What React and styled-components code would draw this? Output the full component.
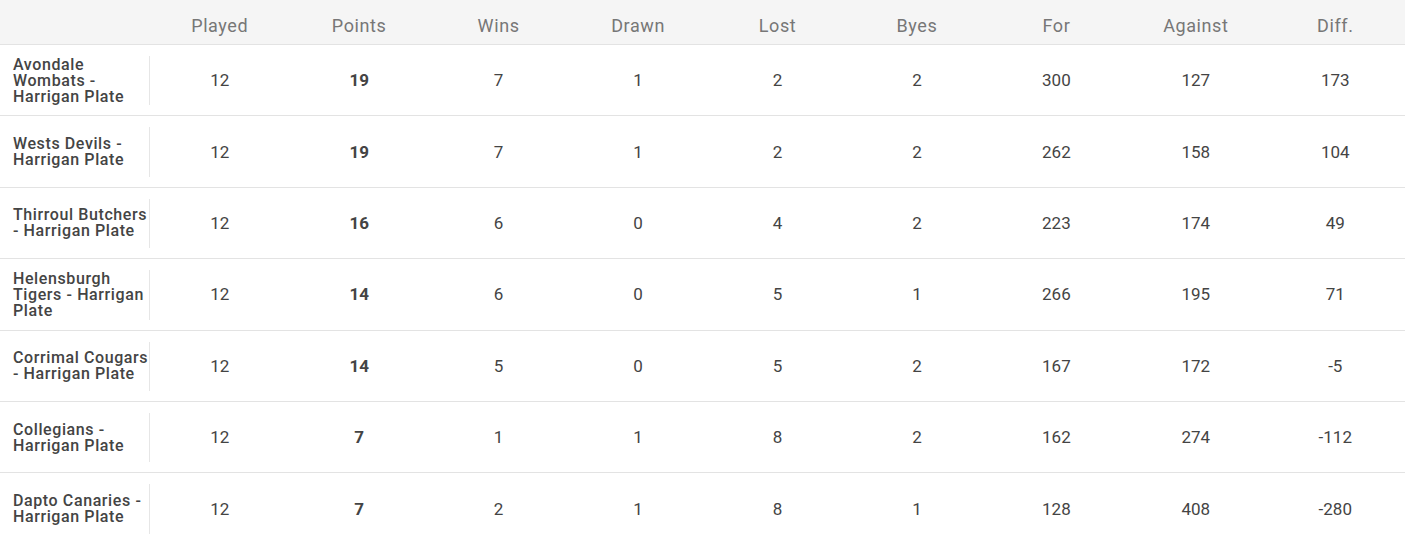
import React from "react";
import styled, { createGlobalStyle } from "styled-components";

const Global = createGlobalStyle`
  html, body { margin: 0; padding: 0; background: #fff; }
  body { font-family: Roboto, "Liberation Sans", sans-serif; }
`;

const Table = styled.div`
  width: 1405px;
  display: flex;
  flex-direction: column;
`;

const Row = styled.div`
  display: grid;
  grid-template-columns: 150px repeat(9, 1fr);
  height: ${(p) => (p.$head ? "45px" : "71.4px")};
  box-sizing: border-box;
  background: ${(p) => (p.$head ? "#f5f5f5" : "#fff")};
  border-bottom: 1px solid #e3e3e3;
`;

const HeadCell = styled.div`
  display: flex;
  align-items: center;
  justify-content: center;
  font-size: 18px;
  color: #777;
  letter-spacing: 0.6px;
  padding-top: 6px;
  box-sizing: border-box;
`;

const TeamCell = styled.div`
  display: flex;
  align-items: center;
  padding: 11px 0 10px 13px;
  box-sizing: border-box;
`;

const TeamName = styled.div`
  height: 100%;
  width: 100%;
  display: flex;
  align-items: center;
  border-right: 1px solid #e6e6e6;
  font-size: 16px;
  font-weight: 500;
  line-height: 16px;
  letter-spacing: 0.6px;
  color: #444;
  box-sizing: border-box;
`;

const Cell = styled.div`
  display: flex;
  align-items: center;
  justify-content: center;
  font-size: 17px;
  font-weight: ${(p) => (p.$bold ? 700 : 400)};
  color: #444;
`;

const headers = ["Played", "Points", "Wins", "Drawn", "Lost", "Byes", "For", "Against", "Diff."];

const rows = [
  ["Avondale Wombats - Harrigan Plate", 12, 19, 7, 1, 2, 2, 300, 127, 173],
  ["Wests Devils - Harrigan Plate", 12, 19, 7, 1, 2, 2, 262, 158, 104],
  ["Thirroul Butchers - Harrigan Plate", 12, 16, 6, 0, 4, 2, 223, 174, 49],
  ["Helensburgh Tigers - Harrigan Plate", 12, 14, 6, 0, 5, 1, 266, 195, 71],
  ["Corrimal Cougars - Harrigan Plate", 12, 14, 5, 0, 5, 2, 167, 172, -5],
  ["Collegians - Harrigan Plate", 12, 7, 1, 1, 8, 2, 162, 274, -112],
  ["Dapto Canaries - Harrigan Plate", 12, 7, 2, 1, 8, 1, 128, 408, -280],
];

export default function App() {
  return (
    <>
      <Global />
      <Table>
        <Row $head>
          <HeadCell />
          {headers.map((h) => (
            <HeadCell key={h}>{h}</HeadCell>
          ))}
        </Row>
        {rows.map(([name, ...vals]) => (
          <Row key={name}>
            <TeamCell>
              <TeamName>{name}</TeamName>
            </TeamCell>
            {vals.map((v, i) => (
              <Cell key={i} $bold={i === 1}>
                {v}
              </Cell>
            ))}
          </Row>
        ))}
      </Table>
    </>
  );
}
